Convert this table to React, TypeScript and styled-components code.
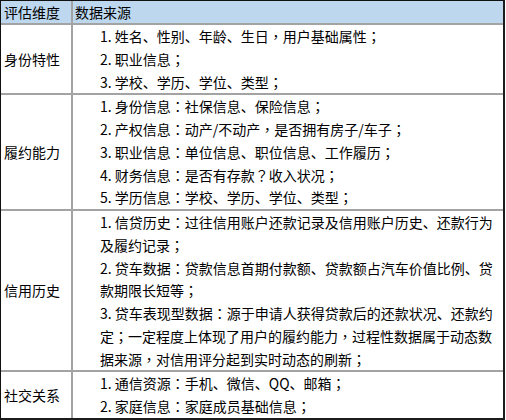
import React from "react";
import styled, { createGlobalStyle } from "styled-components";

const Global = createGlobalStyle`
  html, body { margin: 0; padding: 0; background: #ffffff; }
  body { font-family: "Noto Sans CJK SC", "Microsoft YaHei", sans-serif; }
`;

const Table = styled.table`
  border-collapse: separate;
  border-spacing: 0;
  width: 505px;
  table-layout: fixed;
  border-top: 1px solid #111;
  border-left: 1px solid #111;
  border-right: 2px solid #1c1c1c;
  border-bottom: 2px solid #1c1c1c;
  font-size: 14px;
  color: #000;
`;

const HeadCell = styled.th<{ $first?: boolean }>`
  background: #bdd7ee;
  font-weight: normal;
  text-align: left;
  height: 22px;
  line-height: 22px;
  padding: 0 0 0 ${(p) => (p.$first ? "3px" : "2px")};
  border-bottom: 2px solid #a3a3a3;
  border-right: ${(p) => (p.$first ? "2px solid #a3a3a3" : "none")};
  white-space: nowrap;
`;

const LabelCell = styled.td<{ $last?: boolean }>`
  width: 67px;
  padding: 0 0 0 3px;
  vertical-align: middle;
  line-height: 22.75px;
  border-right: 2px solid #a3a3a3;
  border-bottom: ${(p) => (p.$last ? "none" : "2px solid #a3a3a3")};
  white-space: nowrap;
`;

const ContentCell = styled.td<{ $last?: boolean }>`
  padding: 0 5px 0 27px;
  vertical-align: top;
  line-height: 22.75px;
  border-bottom: ${(p) => (p.$last ? "none" : "2px solid #a3a3a3")};
`;

const Line = styled.div`
  margin: 0;
`;

const Punct = styled.span`
  font-family: "Noto Sans CJK TC", "Noto Sans CJK SC", sans-serif;
`;

type Row = { label: string; items: string[] };

const rows: Row[] = [
  {
    label: "身份特性",
    items: [
      "1. 姓名、性别、年龄、生日，用户基础属性；",
      "2. 职业信息；",
      "3. 学校、学历、学位、类型；",
    ],
  },
  {
    label: "履约能力",
    items: [
      "1. 身份信息：社保信息、保险信息；",
      "2. 产权信息：动产/不动产，是否拥有房子/车子；",
      "3. 职业信息：单位信息、职位信息、工作履历；",
      "4. 财务信息：是否有存款？收入状况；",
      "5. 学历信息：学校、学历、学位、类型；",
    ],
  },
  {
    label: "信用历史",
    items: [
      "1. 信贷历史：过往信用账户还款记录及信用账户历史、还款行为及履约记录；",
      "2. 贷车数据：贷款信息首期付款额、贷款额占汽车价值比例、贷款期限长短等；",
      "3. 贷车表现型数据：源于申请人获得贷款后的还款状况、还款约定；一定程度上体现了用户的履约能力，过程性数据属于动态数据来源，对信用评分起到实时动态的刷新；",
    ],
  },
  {
    label: "社交关系",
    items: ["1. 通信资源：手机、微信、QQ、邮箱；", "2. 家庭信息：家庭成员基础信息；"],
  },
];

function renderText(t: string) {
  return t.split(/([：；？，])/).map((part, i) =>
    /^[：；？，]$/.test(part) ? <Punct key={i}>{part}</Punct> : <React.Fragment key={i}>{part}</React.Fragment>
  );
}

export default function App() {
  return (
    <>
      <Global />
      <Table>
        <colgroup>
          <col style={{ width: 72 }} />
          <col />
        </colgroup>
        <thead>
          <tr>
            <HeadCell $first>评估维度</HeadCell>
            <HeadCell>数据来源</HeadCell>
          </tr>
        </thead>
        <tbody>
          {rows.map((r, i) => {
            const last = i === rows.length - 1;
            return (
              <tr key={r.label}>
                <LabelCell $last={last}>{r.label}</LabelCell>
                <ContentCell $last={last}>
                  {r.items.map((t) => (
                    <Line key={t}>{renderText(t)}</Line>
                  ))}
                </ContentCell>
              </tr>
            );
          })}
        </tbody>
      </Table>
    </>
  );
}
